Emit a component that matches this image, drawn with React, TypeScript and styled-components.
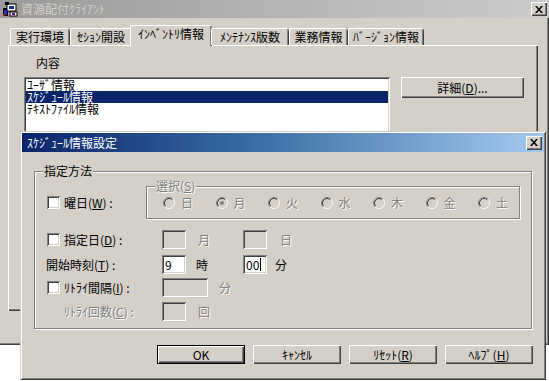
import React from "react";
import styled, { createGlobalStyle, css } from "styled-components";

const FACE = "#d4d0c8";
const FONT = `"Noto Sans CJK JP", "Noto Sans", sans-serif`;

const Global = createGlobalStyle`
  html, body { margin: 0; padding: 0; background: #fff; }
  body { font-family: ${FONT}; font-size: 12px; color: #000; }
  * { box-sizing: border-box; }
`;

const windowEdge = css`
  box-shadow: inset 1px 1px 0 ${FACE}, inset -1px -1px 0 #404040,
    inset 2px 2px 0 #fff, inset -2px -2px 0 #808080;
`;
const raisedEdge = css`
  box-shadow: inset 1px 1px 0 #fff, inset -1px -1px 0 #404040,
    inset -2px -2px 0 #808080;
`;
const sunkenEdge = css`
  box-shadow: inset 1px 1px 0 #808080, inset -1px -1px 0 #fff,
    inset 2px 2px 0 #404040, inset -2px -2px 0 ${FACE};
`;
const disabledText = css`
  color: #808080;
  text-shadow: 1px 1px 0 #fff;
`;

const Screen = styled.div`
  position: relative;
  width: 549px;
  height: 381px;
  overflow: hidden;
  background: #fff;
`;

/* ---------- background window ---------- */
const BgWindow = styled.div`
  width: 549px;
  height: 345px;
  background: ${FACE};
  display: flex;
  flex-direction: column;
  box-shadow: inset -1px 0 0 #404040, inset -2px 0 0 #808080,
    inset 0 -1px 0 #404040, inset 0 -2px 0 #808080;
`;

const TitleBar = styled.div<{ $active?: boolean }>`
  height: ${(p) => (p.$active ? 19 : 18)}px;
  display: flex;
  align-items: center;
  padding: 0 2px 0 2px;
  background: ${(p) =>
    p.$active
      ? "linear-gradient(90deg, #0a246a 0%, #3a6ea5 45%, #a6caf0 100%)"
      : "linear-gradient(90deg, #9a9a9a 0%, #b4b4b4 50%, #cccccc 100%)"};
  color: ${(p) => (p.$active ? "#fff" : FACE)};
  flex: none;
`;

const TitleText = styled.span`
  flex: 1;
  font-size: 12px;
  line-height: 12px;
  white-space: nowrap;
  padding-left: 3px;
`;

const CloseBtn = styled.span`
  width: 16px;
  height: 14px;
  background: ${FACE};
  display: flex;
  align-items: center;
  justify-content: center;
  flex: none;
  ${raisedEdge};
`;

const IconSvg = styled.svg`
  flex: none;
  display: block;
`;

const BgBody = styled.div`
  padding: 7px 0 0 8px;
  display: flex;
  flex-direction: column;
`;

const TabStrip = styled.div`
  height: 20px;
  display: flex;
  align-items: flex-end;
  padding-left: 2px;
  position: relative;
  z-index: 1;
`;

const Tab = styled.div<{ $w: number; $sel?: boolean }>`
  width: ${(p) => p.$w}px;
  height: ${(p) => (p.$sel ? 21 : 17)}px;
  margin: ${(p) => (p.$sel ? "0 -1px -1px -2px" : "0")};
  background: ${FACE};
  border-radius: 2px 2px 0 0;
  box-shadow: inset 1px 0 0 #fff, inset 0 1px 0 #fff, inset -1px 0 0 #404040,
    inset -2px 0 0 #808080;
  display: flex;
  justify-content: center;
  padding-top: 3px;
  font-size: 12px;
  line-height: 12px;
  white-space: nowrap;
  flex: none;
`;

const TabPanel = styled.div`
  width: 530px;
  height: 266px;
  background: ${FACE};
  ${raisedEdge};
  padding: 12px 0 0 16px;
  display: flex;
  flex-direction: column;
`;

const PlainLabel = styled.div`
  margin-left: 12px;
  line-height: 12px;
  height: 12px;
`;

const ListRow = styled.div`
  display: flex;
  align-items: flex-start;
  gap: 11px;
  margin-top: 8px;
`;

const ListBox = styled.div`
  width: 366px;
  height: 130px;
  background: #fff;
  ${sunkenEdge};
  padding: 2px;
  display: flex;
  flex-direction: column;
`;

const ListItem = styled.div<{ $sel?: boolean }>`
  height: 12px;
  line-height: 12px;
  padding-left: 1px;
  white-space: nowrap;
  background: ${(p) => (p.$sel ? "#0a246a" : "transparent")};
  color: ${(p) => (p.$sel ? "#fff" : "#000")};
`;

const Button = styled.div<{ $w: number; $h: number; $default?: boolean }>`
  width: ${(p) => p.$w}px;
  height: ${(p) => p.$h}px;
  background: ${FACE};
  display: flex;
  align-items: center;
  justify-content: center;
  line-height: 12px;
  white-space: nowrap;
  flex: none;
  ${(p) =>
    p.$default
      ? css`
          box-shadow: inset 0 0 0 1px #000, inset 2px 2px 0 #fff,
            inset -2px -2px 0 #404040, inset -3px -3px 0 #808080;
        `
      : raisedEdge};
`;

/* ---------- dialog ---------- */
const Dialog = styled.div`
  position: absolute;
  left: 20px;
  top: 131px;
  width: 526px;
  height: 249px;
  background: ${FACE};
  padding: 2px;
  display: flex;
  flex-direction: column;
  ${windowEdge};
`;

const DialogBody = styled.div`
  padding: 19px 11px 0 12px;
  display: flex;
  flex-direction: column;
`;

const GroupBox = styled.div<{ $w: number; $h: number }>`
  position: relative;
  width: ${(p) => p.$w}px;
  height: ${(p) => p.$h}px;
  border: 1px solid #808080;
  box-shadow: 1px 1px 0 #fff, inset 1px 1px 0 #fff;
  flex: none;
`;

const GroupCaption = styled.span<{ $disabled?: boolean }>`
  position: absolute;
  left: 8px;
  top: -7px;
  padding: 0 1px;
  background: ${FACE};
  line-height: 12px;
  white-space: nowrap;
  ${(p) => p.$disabled && disabledText};
`;

const GroupInner = styled.div`
  display: flex;
  flex-direction: column;
  padding-top: 14px;
`;

const FormRow = styled.div<{ $mt: number; $h: number }>`
  display: flex;
  align-items: center;
  margin-top: ${(p) => p.$mt}px;
  height: ${(p) => p.$h}px;
`;

const LabelCell = styled.div<{ $w: number; $pl: number; $disabled?: boolean }>`
  width: ${(p) => p.$w}px;
  padding-left: ${(p) => p.$pl}px;
  display: flex;
  align-items: center;
  gap: 4px;
  white-space: nowrap;
  line-height: 12px;
  flex: none;
  ${(p) => p.$disabled && disabledText};
`;

const CheckBox = styled.span`
  width: 13px;
  height: 13px;
  background: #fff;
  flex: none;
  ${sunkenEdge};
`;

const SelectGroup = styled(GroupBox)`
  display: flex;
  align-items: center;
  padding-left: 16px;
`;

const RadioItem = styled.div`
  width: 52.5px;
  display: flex;
  align-items: center;
  gap: 6px;
  flex: none;
  line-height: 12px;
  ${disabledText};
`;

const Edit = styled.div<{ $w: number; $disabled?: boolean }>`
  width: ${(p) => p.$w}px;
  height: 19px;
  background: ${(p) => (p.$disabled ? FACE : "#fff")};
  ${sunkenEdge};
  display: flex;
  align-items: center;
  padding-left: 3px;
  line-height: 12px;
  flex: none;
`;

const Caret = styled.span`
  display: inline-block;
  width: 1px;
  height: 13px;
  background: #000;
  margin-left: 1px;
`;

const Unit = styled.div<{ $w?: number; $pl: number; $disabled?: boolean }>`
  width: ${(p) => (p.$w ? `${p.$w}px` : "auto")};
  padding-left: ${(p) => p.$pl}px;
  line-height: 12px;
  flex: none;
  ${(p) => p.$disabled && disabledText};
`;

const ButtonRow = styled.div`
  display: flex;
  justify-content: flex-end;
  gap: 8px;
  margin-top: 16px;
`;

/* ---------- drawings ---------- */
const CloseX = () => (
  <IconSvg width="8" height="7" viewBox="0 0 8 7">
    <path d="M0 0h2l2 2.5L6 0h2L5 3.5 8 7H6L4 4.5 2 7H0l3-3.5z" fill="#000" />
  </IconSvg>
);

const AppIcon = () => (
  <IconSvg width="16" height="16" viewBox="0 0 16 16">
    <rect x="1" y="7" width="5" height="8" fill="#000" />
    <rect x="2" y="9" width="3" height="5" fill="#3030c0" />
    <rect x="1" y="13" width="2" height="2" fill="#c00000" />
    <rect x="5" y="3" width="9" height="7" fill="#fff" stroke="#000" />
    <rect x="7" y="5" width="5" height="3" fill="#1030a0" />
    <rect x="3" y="1" width="4" height="3" fill="#000" />
    <rect x="8" y="11" width="7" height="4" fill="#fff" stroke="#000" />
    <rect x="10" y="12" width="3" height="2" fill="#800080" />
  </IconSvg>
);

const Radio = ({ checked }: { checked?: boolean }) => (
  <IconSvg width="12" height="12" viewBox="0 0 12 12">
    <circle cx="6" cy="6" r="4.5" fill={FACE} />
    <path d="M2.11 9.89A5.5 5.5 0 0 1 9.89 2.11" stroke="#808080" fill="none" />
    <path d="M9.89 2.11A5.5 5.5 0 0 1 2.11 9.89" stroke="#fff" fill="none" />
    <path d="M2.82 9.18A4.5 4.5 0 0 1 9.18 2.82" stroke="#404040" fill="none" />
    <path d="M9.18 2.82A4.5 4.5 0 0 1 2.82 9.18" stroke={FACE} fill="none" />
    {checked && <circle cx="6" cy="6" r="2" fill="#808080" />}
  </IconSvg>
);

const tabs: { label: string; w: number; sel?: boolean }[] = [
  { label: "実行環境", w: 60 },
  { label: "ｾｼｮﾝ開設", w: 62 },
  { label: "ｲﾝﾍﾞﾝﾄﾘ情報", w: 82, sel: true },
  { label: "ﾒﾝﾃﾅﾝｽ版数", w: 78 },
  { label: "業務情報", w: 59 },
  { label: "ﾊﾞｰｼﾞｮﾝ情報", w: 76 },
];

const days = ["日", "月", "火", "水", "木", "金", "土"];

export default function App() {
  return (
    <Screen>
      <Global />
      <BgWindow>
        <TitleBar>
          <AppIcon />
          <TitleText>資源配付ｸﾗｲｱﾝﾄ</TitleText>
          <CloseBtn>
            <CloseX />
          </CloseBtn>
        </TitleBar>
        <BgBody>
          <TabStrip>
            {tabs.map((t) => (
              <Tab key={t.label} $w={t.w} $sel={t.sel}>
                {t.label}
              </Tab>
            ))}
          </TabStrip>
          <TabPanel>
            <PlainLabel>内容</PlainLabel>
            <ListRow>
              <ListBox>
                <ListItem>ﾕｰｻﾞ情報</ListItem>
                <ListItem $sel>ｽｹｼﾞｭｰﾙ情報</ListItem>
                <ListItem>ﾃｷｽﾄﾌｧｲﾙ情報</ListItem>
              </ListBox>
              <Button $w={123} $h={21}>
                詳細(<u>D</u>)...
              </Button>
            </ListRow>
          </TabPanel>
        </BgBody>
      </BgWindow>

      <Dialog>
        <TitleBar $active>
          <TitleText>ｽｹｼﾞｭｰﾙ情報設定</TitleText>
          <CloseBtn>
            <CloseX />
          </CloseBtn>
        </TitleBar>
        <DialogBody>
          <GroupBox $w={498} $h={158}>
            <GroupCaption>指定方法</GroupCaption>
            <GroupInner>
              <FormRow $mt={0} $h={33}>
                <LabelCell $w={111} $pl={12}>
                  <CheckBox />
                  <span>
                    曜日(<u>W</u>) :
                  </span>
                </LabelCell>
                <SelectGroup $w={374} $h={33}>
                  <GroupCaption $disabled>
                    選択(<u>S</u>)
                  </GroupCaption>
                  {days.map((d, i) => (
                    <RadioItem key={d}>
                      <Radio checked={i === 1} />
                      <span>{d}</span>
                    </RadioItem>
                  ))}
                </SelectGroup>
              </FormRow>

              <FormRow $mt={11} $h={19}>
                <LabelCell $w={127} $pl={12}>
                  <CheckBox />
                  <span>
                    指定日(<u>D</u>) :
                  </span>
                </LabelCell>
                <Edit $w={24} $disabled />
                <Unit $w={57} $pl={12} $disabled>
                  月
                </Unit>
                <Edit $w={24} $disabled />
                <Unit $pl={13} $disabled>
                  日
                </Unit>
              </FormRow>

              <FormRow $mt={6} $h={19}>
                <LabelCell $w={127} $pl={11}>
                  <span>
                    開始時刻(<u>T</u>) :
                  </span>
                </LabelCell>
                <Edit $w={24}>9</Edit>
                <Unit $w={57} $pl={10}>
                  時
                </Unit>
                <Edit $w={24}>
                  00
                  <Caret />
                </Edit>
                <Unit $pl={8}>分</Unit>
              </FormRow>

              <FormRow $mt={4} $h={19}>
                <LabelCell $w={127} $pl={12}>
                  <CheckBox />
                  <span>
                    ﾘﾄﾗｲ間隔(<u>I</u>) :
                  </span>
                </LabelCell>
                <Edit $w={46} $disabled />
                <Unit $pl={11} $disabled>
                  分
                </Unit>
              </FormRow>

              <FormRow $mt={5} $h={19}>
                <LabelCell $w={127} $pl={29} $disabled>
                  <span>
                    ﾘﾄﾗｲ回数(<u>C</u>) :
                  </span>
                </LabelCell>
                <Edit $w={24} $disabled />
                <Unit $pl={12} $disabled>
                  回
                </Unit>
              </FormRow>
            </GroupInner>
          </GroupBox>

          <ButtonRow>
            <Button $w={88} $h={19} $default>
              OK
            </Button>
            <Button $w={88} $h={19}>
              ｷｬﾝｾﾙ
            </Button>
            <Button $w={88} $h={19}>
              ﾘｾｯﾄ(<u>R</u>)
            </Button>
            <Button $w={88} $h={19}>
              ﾍﾙﾌﾟ(<u>H</u>)
            </Button>
          </ButtonRow>
        </DialogBody>
      </Dialog>
    </Screen>
  );
}
